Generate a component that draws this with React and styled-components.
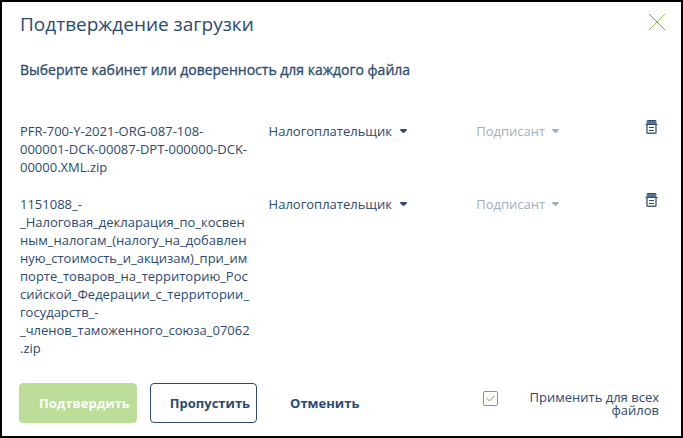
import React from "react";
import styled, { createGlobalStyle } from "styled-components";

const navy = "#2c4a70";
const muted = "#a0afc0";
const green = "#6fb52c";

const GlobalStyle = createGlobalStyle`
  *, *::before, *::after { box-sizing: border-box; }
  body {
    margin: 0;
    background: #fff;
    color: ${navy};
    font: 13px/18px "Open Sans", "Noto Sans", sans-serif;
  }
  button, select { font: inherit; color: inherit; }
`;

const Dialog = styled.section`
  display: flex;
  flex-direction: column;
  min-height: 100vh;
  padding: 8px 22px 13px 17px;
  border: 2px solid #000;
`;

const Header = styled.header`
  display: flex;
  align-items: flex-start;
  justify-content: space-between;
  padding-left: 1px;
`;

const Title = styled.h1`
  margin: 0;
  font-size: 19px;
  line-height: 28px;
  font-weight: 400;
`;

const IconButton = styled.button`
  display: block;
  padding: 0;
  border: 0;
  background: none;
  cursor: pointer;
  svg { display: block; }
`;

const CloseButton = styled(IconButton)`
  margin: 4px -6px 0 0;
`;

const Subtitle = styled.h2`
  margin: 22px 0 42px;
  padding-left: 1px;
  font-size: 14px;
  line-height: 20px;
  font-weight: 500;
  -webkit-text-stroke: 0.3px currentColor;
`;

const FileList = styled.ul`
  display: flex;
  flex-direction: column;
  gap: 19px;
  margin: 0;
  padding: 0 1px;
  list-style: none;
`;

const FileRow = styled.li`
  display: grid;
  grid-template-columns: 231fr 190fr 151fr 13px;
  column-gap: 18px;
  align-items: start;
`;

const FileName = styled.span`
  min-width: 0;
  overflow-wrap: break-word;
`;

const SelectBox = styled.label`
  display: grid;
  grid-template-columns: max-content 7px;
  column-gap: 7px;
  align-items: center;
  color: ${(p) => (p.$muted ? muted : navy)};
`;

const Select = styled.select`
  appearance: none;
  height: 18px;
  padding: 0;
  border: 0;
  background: none;
`;

const DeleteButton = styled(IconButton)`
  justify-self: end;
  margin-top: -2px;
`;

const Footer = styled.footer`
  display: flex;
  align-items: flex-start;
  gap: 13px;
  margin-top: 26px;
`;

const buttonColors = {
  primary: { line: "#bbdd97", fill: "#bbdd97", text: "#fff" },
  outline: { line: navy, fill: "transparent", text: navy },
  plain: { line: "transparent", fill: "transparent", text: navy },
};

const Button = styled.button`
  height: 40px;
  padding: 0 6px 0 19px;
  border: 1px solid ${(p) => buttonColors[p.$kind].line};
  border-radius: 4px;
  background: ${(p) => buttonColors[p.$kind].fill};
  color: ${(p) => buttonColors[p.$kind].text};
  font-weight: 700;
  white-space: nowrap;
  cursor: pointer;
`;

const ApplyAll = styled.label`
  display: flex;
  justify-content: space-between;
  width: 176px;
  margin: 8px 0 0 auto;
  line-height: 13px;
  text-align: right;
`;

const ApplyText = styled.span`
  width: 140px;
`;

const CheckWrap = styled.span`
  display: grid;
  width: 15px;
  height: 15px;
  > * { grid-area: 1 / 1; }
  svg { pointer-events: none; visibility: hidden; }
  input:checked + svg { visibility: visible; }
`;

const Checkbox = styled.input`
  appearance: none;
  width: 15px;
  height: 15px;
  margin: 0;
  border: 1px solid ${green};
  border-radius: 2px;
`;

const CloseIcon = () => (
  <svg width="16" height="16" viewBox="0 0 16 16" fill="none" stroke={green} aria-hidden="true">
    <path d="M0 0 16 16" strokeWidth="1" />
    <path d="M16 0 0 16" strokeWidth="0.8" />
  </svg>
);

const CaretIcon = () => (
  <svg width="7" height="4" viewBox="0 0 7 4" fill="currentColor" aria-hidden="true">
    <path d="M1 0H6Q7 0 7 1 7 1.5 6 2L4.5 3.5Q3.5 4.3 2.5 3.5L1 2Q0 1.5 0 1 0 0 1 0Z" />
  </svg>
);

const TrashIcon = () => (
  <svg width="13" height="14" viewBox="0 0 13 14" aria-hidden="true">
    <path d="M2.5 0H10.5L11.5 1V4H1.5V1Z" fill="#5c7492" />
    <path d="M2.5 0.5H10.5M0.5 4.5H12.5" stroke={navy} fill="none" />
    <path d="M2 5V12.5Q2 13.3 3 13.3H10Q11 13.3 11 12.5V5" fill="none" stroke="#45607f" strokeWidth="1.4" />
    <path d="M4 7.5H9M4 10.5H9" stroke={navy} fill="none" />
  </svg>
);

const CheckIcon = () => (
  <svg width="15" height="15" viewBox="0 0 15 15" fill="none" stroke={green} aria-hidden="true">
    <path d="M3.5 7 6.5 10 11.5 4.5" />
  </svg>
);

const files = [
  "PFR-700-Y-2021-ORG-087-108-000001-DCK-00087-DPT-000000-DCK-00000.XML.zip",
  "1151088_-_Налоговая_декларация_по_косвенным_налогам_(налогу_на_добавленную_стоимость_и_акцизам)_при_импорте_товаров_на_территорию_Российской_Федерации_с_территории_государств_-_членов_таможенного_союза_07062.zip",
];

function Dropdown({ value, muted: isMuted }) {
  return (
    <SelectBox $muted={isMuted}>
      <Select aria-label={value} defaultValue={value}>
        <option>{value}</option>
      </Select>
      <CaretIcon />
    </SelectBox>
  );
}

export default function App() {
  return (
    <>
      <GlobalStyle />
      <Dialog role="dialog" aria-labelledby="dialog-title">
        <Header>
          <Title id="dialog-title">Подтверждение загрузки</Title>
          <CloseButton type="button" aria-label="Закрыть">
            <CloseIcon />
          </CloseButton>
        </Header>
        <Subtitle>Выберите кабинет или доверенность для каждого файла</Subtitle>
        <FileList>
          {files.map((name) => (
            <FileRow key={name}>
              <FileName>{name}</FileName>
              <Dropdown value="Налогоплательщик" />
              <Dropdown value="Подписант" muted />
              <DeleteButton type="button" aria-label="Удалить">
                <TrashIcon />
              </DeleteButton>
            </FileRow>
          ))}
        </FileList>
        <Footer>
          <Button type="button" $kind="primary">Подтвердить</Button>
          <Button type="button" $kind="outline">Пропустить</Button>
          <Button type="button" $kind="plain">Отменить</Button>
          <ApplyAll>
            <CheckWrap>
              <Checkbox type="checkbox" defaultChecked />
              <CheckIcon />
            </CheckWrap>
            <ApplyText>Применить для всех файлов</ApplyText>
          </ApplyAll>
        </Footer>
      </Dialog>
    </>
  );
}
